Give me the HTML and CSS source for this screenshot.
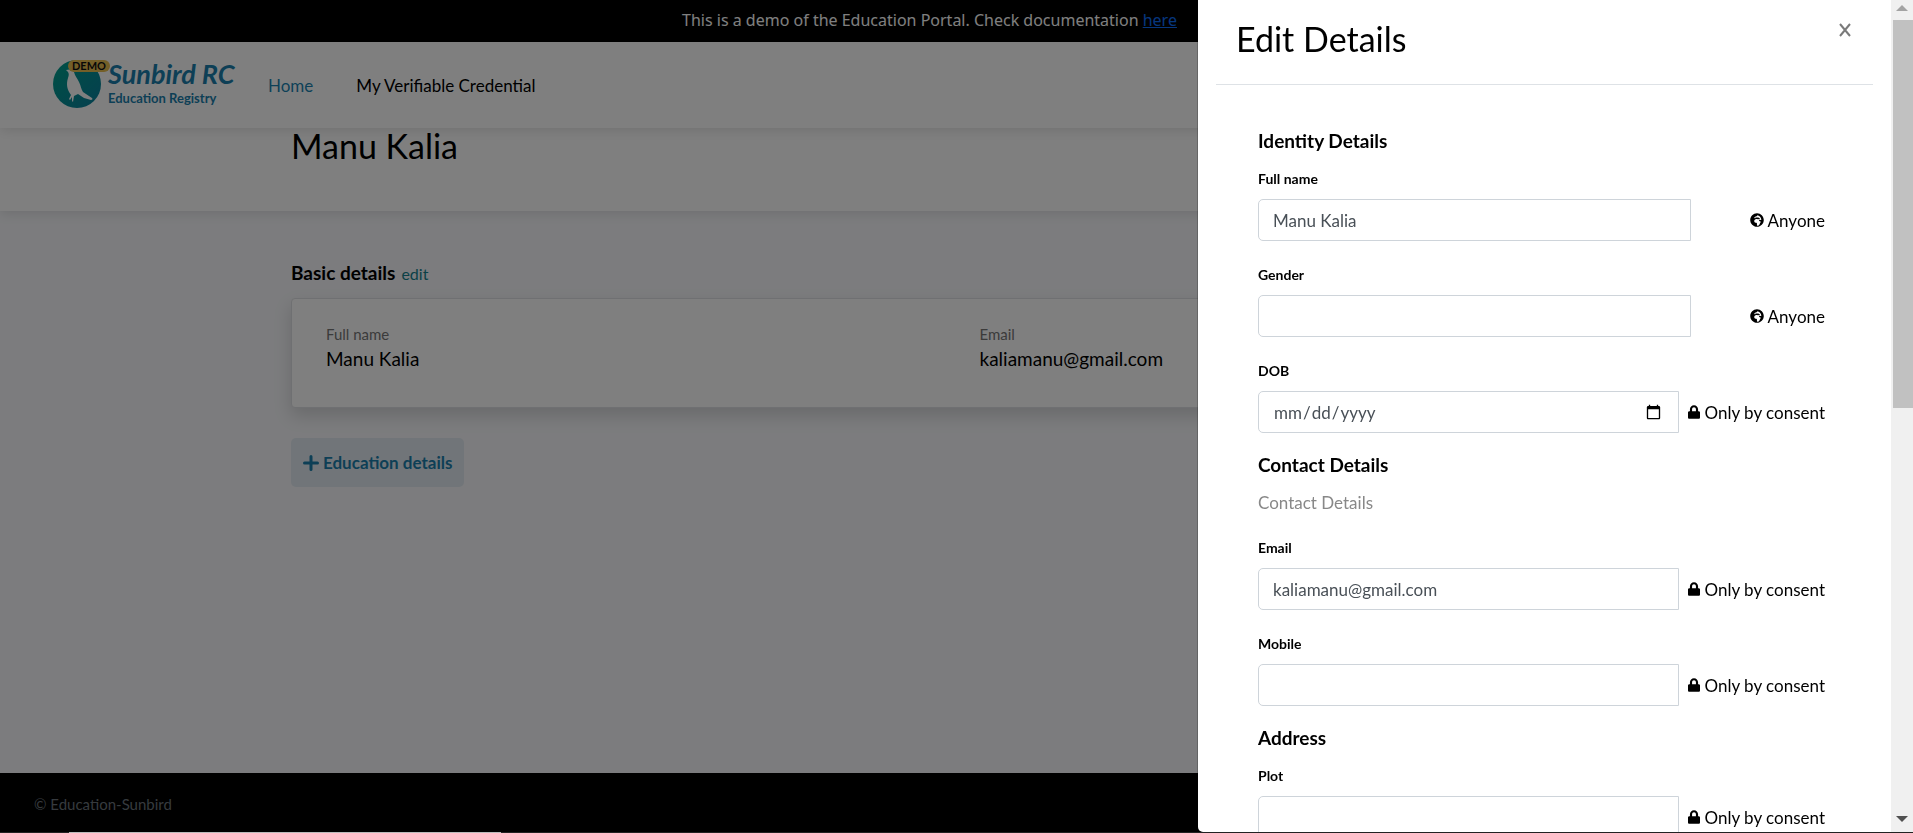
FILE: index.html
```html
<!DOCTYPE html>
<html lang="en">
<head>
<meta charset="utf-8">
<meta name="viewport" content="width=device-width, initial-scale=1">
<title>Education Portal</title>
<link rel="stylesheet" href="styles.css">
</head>
<body>
<svg class="sprite" aria-hidden="true">
  <symbol id="globe" viewBox="0 0 496 512"><path d="M248 8C111 8 0 119 0 256s111 248 248 248 248-111 248-248S385 8 248 8zm160 215.500v6.900c0 7.600-4.300 14.500-11.100 17.900l-15.200 7.600c-5.500 2.700-11.900 2.400-17.100-1l-14.300-9.400c-4.600-3-10.300-3.800-15.500-2l-2.800.9c-11.100 3.700-15.800 16.900-9.300 26.600l13.300 19.900c3.700 5.600 10 8.900 16.600 8.900h8.200c11 0 20 9 20 20v11.500c0 4.300-1.400 8.500-4 12l-18.500 24.600c-1.400 1.900-2.400 4.100-3 6.500l-4.300 22.800c-.8 4.300-3.100 8.200-6.400 11.100-10.500 9.200-19.600 19.900-27.400 31.500l-13.200 19.800c-5.200 7.900-14 12.600-23.400 12.600-10.600 0-20.400-6-25.100-15.500-6.900-13.700-10.400-28.800-10.400-44.100V376c0-13.300-10.700-24-24-24h-25.700c-12.700 0-25-5.100-34-14.100s-14.100-21.300-14.100-34v-14.100c0-15.100 7.100-29.400 19.200-38.400l29-21.800c11.400-8.600 25.200-11.900 39.200-11.900h.4c7.400 0 14.800 1.700 21.400 5.100l14.200 7.100c7.100 3.600 15.300 4.200 22.900 1.600l47.200-15.700c6.900-2.300 11.500-8.800 11.500-16 0-9.300-7.600-16.900-16.900-16.900h-10.100c-4.500 0-8.800-1.800-12-5l-6.900-6.900c-3.200-3.200-7.500-5-12-5h-89.700c-7.400 0-12.900 6.200-14.900 12.500l-2.200 6.600c-2.100 6.400-8.200 9.700-15 9.700h-8.800c-9.300 0-16.900-7.600-16.900-16.900v-5.200c0-7.300 4.700-13.700 11.600-16l17.500-5.900c5.200-1.700 9.800-5 13.200-9.500l13.900-18.600c3.200-4.300 8.200-6.800 13.600-6.800h20.900c9.300 0 16.900-7.600 16.900-16.900V78.300c85.500 22.800 145.700 78 145.700 145.200z"/></symbol>
  <symbol id="lock" viewBox="0 0 448 512"><path d="M400 224h-24v-72C376 68.200 307.800 0 224 0S72 68.200 72 152v72H48c-26.500 0-48 21.500-48 48v192c0 26.500 21.500 48 48 48h352c26.500 0 48-21.500 48-48V272c0-26.500-21.500-48-48-48zm-104 0H152v-72c0-39.700 32.300-72 72-72s72 32.300 72 72v72z"/></symbol>
</svg>

<div class="page">
  <p class="notice">This is a demo of the Education Portal. Check documentation <a href="#">here</a></p>
  <header class="navbar">
    <a class="brand" href="#" aria-label="Sunbird RC Education Registry">
      <svg class="logo" width="190" height="52" viewBox="0 0 190 52">
        <defs><linearGradient id="disc" x1="0" y1="0" x2="1" y2="1"><stop offset="0" stop-color="#00a08a"/><stop offset="1" stop-color="#0b7f9f"/></linearGradient></defs>
        <circle cx="25" cy="25" r="24" fill="url(#disc)"/>
        <path d="M14 11c3-1 6-1 8 2 1 4 3 6 5 10 2 4 2 7 4 10l9 6c1 1 0 2-1 2l-7-2-6-4-4 2-1 6-1-1v-4l-2 3-1-1 2-4c-4-5-5-11-3-17 1-3 1-4 0-6z" fill="#fff"/>
        <rect x="16" y="1" width="42" height="12" rx="6" fill="#e9bf50"/>
        <text class="brand-demo" x="20" y="11">DEMO</text>
        <text class="brand-name" x="56" y="25">Sunbird RC</text>
        <text class="brand-sub" x="56" y="44">Education Registry</text>
      </svg>
    </a>
    <nav class="links">
      <a class="link active" href="#">Home</a>
      <a class="link" href="#">My Verifiable Credential</a>
    </nav>
  </header>
  <section class="banner"><h1 class="container person">Manu Kalia</h1></section>
  <main class="container content">
    <div class="section-head"><h2>Basic details</h2><a href="#">edit</a></div>
    <dl class="card">
      <div><dt>Full name</dt><dd>Manu Kalia</dd></div>
      <div><dt>Email</dt><dd>kaliamanu@gmail.com</dd></div>
    </dl>
    <button class="add" type="button"><svg width="16" height="16" viewBox="0 0 16 16"><path d="M8 1.500v13M1.500 8h13" stroke="currentColor" stroke-width="3" stroke-linecap="round"/></svg>Education details</button>
  </main>
  <footer class="footer">© Education-Sunbird</footer>
</div>

<div class="backdrop"></div>

<aside class="drawer" role="dialog" aria-labelledby="drawer-title">
  <div class="panel">
    <div class="panel-head">
      <h2 id="drawer-title">Edit Details</h2>
      <button class="close" type="button" aria-label="Close"><svg width="16" height="16" viewBox="0 0 16 16"><path d="M3 2l10 12M13 2L3 14" stroke="#7a7a7a" stroke-width="2"/></svg></button>
    </div>
    <form class="form">
      <section class="group">
        <h3>Identity Details</h3>
        <div class="fields">
          <div class="field"><label for="name">Full name</label><div class="row"><input id="name" type="text" value="Manu Kalia"><span class="access"><svg class="globe"><use href="#globe"/></svg>Anyone</span></div></div>
          <div class="field"><label for="gender">Gender</label><div class="row"><input id="gender" type="text"><span class="access"><svg class="globe"><use href="#globe"/></svg>Anyone</span></div></div>
          <div class="field"><label for="dob">DOB</label><div class="row"><input id="dob" type="date"><span class="access"><svg class="lock"><use href="#lock"/></svg>Only by consent</span></div></div>
        </div>
      </section>
      <section class="group">
        <h3>Contact Details</h3>
        <p class="hint">Contact Details</p>
        <div class="fields">
          <div class="field"><label for="email">Email</label><div class="row"><input id="email" type="email" value="kaliamanu@gmail.com"><span class="access"><svg class="lock"><use href="#lock"/></svg>Only by consent</span></div></div>
          <div class="field"><label for="mobile">Mobile</label><div class="row"><input id="mobile" type="tel"><span class="access"><svg class="lock"><use href="#lock"/></svg>Only by consent</span></div></div>
        </div>
      </section>
      <section class="group">
        <h3>Address</h3>
        <div class="fields">
          <div class="field"><label for="plot">Plot</label><div class="row"><input id="plot" type="text"><span class="access"><svg class="lock"><use href="#lock"/></svg>Only by consent</span></div></div>
        </div>
      </section>
    </form>
  </div>
  <div class="scrollbar" aria-hidden="true">
    <svg width="12" height="20" viewBox="0 0 12 20"><path d="M0 11l6-6 6 6z" fill="#a3a3a3"/></svg>
    <div class="track"><div class="thumb"></div></div>
    <svg width="12" height="20" viewBox="0 0 12 20"><path d="M0 4l6 6 6-6z" fill="#505050"/></svg>
  </div>
</aside>
<div class="edge"></div>
</body>
</html>
```
FILE: styles.css
```css
* { box-sizing: border-box; }
body { margin: 0; height: 100vh; overflow: hidden; font-family: Lato, "Liberation Sans", sans-serif; font-size: 17px; color: #000; }
h1, h2, h3, p, dl, dd { margin: 0; }
button, input { font-family: inherit; }
.sprite { display: none; }

.page { min-height: 100vh; display: flex; flex-direction: column; background: #f8f9fc; }
.notice { background: #000; color: #fff; text-align: center; line-height: 24px; padding: 8px 54px 10px 0; font-family: "Noto Sans", sans-serif; font-size: 16px; }
.notice a { color: #0d6efd; }
.navbar { position: relative; display: flex; align-items: center; gap: 26px; height: 86px; padding: 0 52px; background: #fff; box-shadow: 0 2px 12px rgba(0, 0, 0, .12); }
.brand { display: flex; }
.logo { overflow: visible; }
.brand-demo { font-size: 11px; font-weight: 700; fill: #111; }
.brand-name { font-size: 27px; font-style: italic; font-weight: 700; fill: #1b7fac; }
.brand-sub { font-size: 13px; font-weight: 700; fill: #1b7fac; }
.links { display: flex; gap: 43px; }
.link { color: #000; text-decoration: none; }
.link.active { color: #1b83b0; }
.container { width: 100%; max-width: 1331px; margin: 0 auto; }
.banner { background: #fff; padding-bottom: 48px; box-shadow: 0 2px 12px rgba(0, 0, 0, .12); }
.person { font-size: 34px; font-weight: 400; line-height: 35px; }
.content { flex: 1; padding-top: 49px; }
.section-head { display: flex; align-items: baseline; gap: 6px; line-height: 25px; margin-bottom: 12px; }
.section-head h2 { font-size: 19px; font-weight: 700; }
.section-head a { font-size: 16px; color: #17828f; text-decoration: none; }
.card { display: grid; grid-template-columns: 1fr 1fr; gap: 46px; padding: 24px 34px 34px; border: 1px solid #dfe1e4; border-radius: 4px; background: #fff; box-shadow: 0 8px 18px rgba(0, 0, 0, .15); margin-bottom: 30px; }
.card dt { font-size: 15px; line-height: 22px; color: #777; }
.card dd { font-size: 19px; line-height: 28px; }
.add { display: flex; align-items: center; gap: 4px; height: 49px; padding: 0 12px; border: 0; border-radius: 5px; background: #e2ebf2; color: #1b7fac; font-size: 17px; font-weight: 700; }
.footer { height: 60px; padding: 0 34px; background: #000; color: #6c757d; font-size: 15px; line-height: 62px; }

.backdrop { position: fixed; inset: 0; background: rgba(0, 0, 0, .5); }

.drawer { position: fixed; top: 0; right: 0; bottom: 1px; width: min(100%, 715px); display: flex; background: #fff; border-bottom-left-radius: 5px; box-shadow: 0 0 0 1px rgba(0, 0, 0, .2); overflow: hidden; }
.panel { flex: 1; min-width: 0; overflow: hidden; }
.panel-head { display: flex; justify-content: space-between; align-items: flex-start; margin: 0 18px; padding: 18px 20px 24px; border-bottom: 1px solid #dee2e6; }
.panel-head h2 { font-size: 34px; font-weight: 400; line-height: 42px; }
.close { display: flex; padding: 4px 0; border: 0; background: none; }
.form { display: flex; flex-direction: column; gap: 20px; padding: 44px 66px 40px 60px; }
.group h3 { font-size: 19px; font-weight: 700; line-height: 24px; margin-bottom: 15px; }
.hint { color: #888; line-height: 22px; margin-bottom: 23px; }
.fields { display: flex; flex-direction: column; gap: 23px; }
.field { display: flex; flex-direction: column; gap: 9px; }
.field label { font-size: 14px; font-weight: 700; line-height: 22px; }
.row { display: flex; align-items: center; }
.row input { flex: 1; min-width: 0; height: 42px; padding: 6px 14px; border: 1px solid #ced4da; border-radius: 5px 0 0 5px; background: #fff; color: #495057; font-size: 17px; }
.access { display: flex; align-items: center; justify-content: flex-end; gap: 4px; min-width: 134px; padding-left: 9px; white-space: nowrap; }
.globe { width: 14px; height: 14px; }
.lock { width: 12px; height: 14px; }
.scrollbar { width: 22px; display: flex; flex-direction: column; align-items: center; background: #f0f0f0; }
.track { flex: 1; align-self: stretch; padding-left: 2px; }
.thumb { height: 49%; background: #c1c1c1; }
.edge { position: fixed; left: 0; right: 0; bottom: 0; height: 1px; background: linear-gradient(to right, #222 69px, #bbb 69px, #bbb 501px, #222 501px); }
```
